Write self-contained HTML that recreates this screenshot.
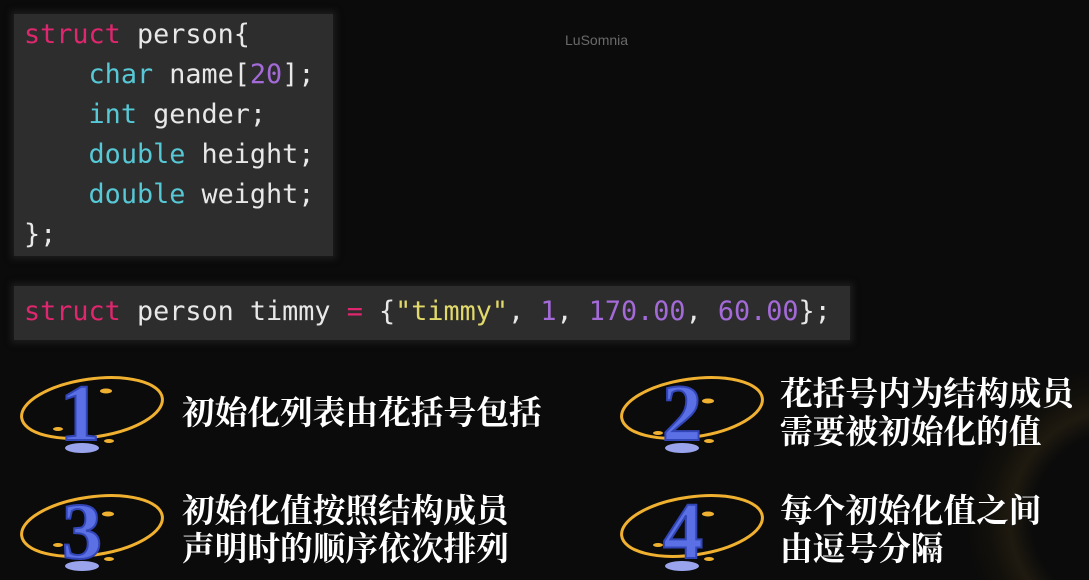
<!DOCTYPE html>
<html><head><meta charset="utf-8"><style>
html,body{margin:0;padding:0;height:580px;overflow:hidden}
body{width:1089px;height:580px;position:relative;overflow:hidden;font-family:"Liberation Sans",sans-serif;background:radial-gradient(circle 220px at 1120px 520px,#0b0b0b 0,#0b0b0b 88px,#1f1a10 110px,#12100b 132px,#0b0b0b 154px) #0b0b0b}
.box{position:absolute;background:#2d2d2d;box-shadow:0 0 6px 3px #1d1d1d}
.code{position:absolute;font-family:"DejaVu Sans Mono","Liberation Mono",monospace;font-size:26.8px;line-height:40px;color:#e8e8e8;white-space:pre}
.k{color:#e0266e}.t{color:#56c8d6}.n{color:#a36ad8}.s{color:#e2d96b}
.wm{position:absolute;left:565px;top:32px;font-size:14px;color:#6a6a6a}
.cn{position:absolute;font-family:"Liberation Serif","Noto Serif CJK SC",serif;font-weight:bold;font-size:32.7px;line-height:38px;color:#fff}
svg.ic{position:absolute;width:150px;height:90px}
</style></head><body>
<div class="box" style="left:14px;top:14px;width:319px;height:242px"></div>
<div class="code" style="left:24px;top:15px"><span class="k">struct</span> person{
    <span class="t">char</span> name[<span class="n">20</span>];
    <span class="t">int</span> gender;
    <span class="t">double</span> height;
    <span class="t">double</span> weight;
};</div>
<div class="wm">LuSomnia</div>
<div class="box" style="left:14px;top:286px;width:836px;height:54px"></div>
<div class="code" style="left:24px;top:292px"><span class="k">struct</span> person timmy <span class="k">=</span> {<span class="s">"timmy"</span>, <span class="n">1</span>, <span class="n">170.00</span>, <span class="n">60.00</span>};</div>

<svg class="ic" style="left:18px;top:368px" viewBox="0 0 150 90"><ellipse cx="74" cy="40" rx="71" ry="29" transform="rotate(-8 74 40)" fill="none" stroke="#f0b030" stroke-width="3"/><ellipse cx="64" cy="80" rx="17" ry="5" fill="#9aa4ec"/><text x="62" y="72" text-anchor="middle" font-family="Liberation Serif,serif" font-weight="bold" font-size="80" fill="#5a70e4" stroke="#3346b8" stroke-width="2">1</text><ellipse cx="88" cy="23" rx="6" ry="2.5" fill="#f0b030"/><ellipse cx="40" cy="61" rx="5" ry="2" fill="#f0b030"/><ellipse cx="91" cy="73" rx="5" ry="2" fill="#f0b030"/></svg>
<svg class="ic" style="left:618px;top:368px" viewBox="0 0 150 90"><ellipse cx="74" cy="40" rx="71" ry="29" transform="rotate(-8 74 40)" fill="none" stroke="#f0b030" stroke-width="3"/><ellipse cx="64" cy="80" rx="17" ry="5" fill="#9aa4ec"/><text x="64" y="72" text-anchor="middle" font-family="Liberation Serif,serif" font-weight="bold" font-size="80" fill="#5a70e4" stroke="#3346b8" stroke-width="2">2</text><ellipse cx="90" cy="33" rx="6" ry="2.5" fill="#f0b030"/><ellipse cx="40" cy="65" rx="5" ry="2" fill="#f0b030"/><ellipse cx="91" cy="73" rx="5" ry="2" fill="#f0b030"/></svg>
<svg class="ic" style="left:18px;top:486px" viewBox="0 0 150 90"><ellipse cx="74" cy="40" rx="71" ry="29" transform="rotate(-8 74 40)" fill="none" stroke="#f0b030" stroke-width="3"/><ellipse cx="64" cy="80" rx="17" ry="5" fill="#9aa4ec"/><text x="64" y="72" text-anchor="middle" font-family="Liberation Serif,serif" font-weight="bold" font-size="80" fill="#5a70e4" stroke="#3346b8" stroke-width="2">3</text><ellipse cx="90" cy="28" rx="6" ry="2.5" fill="#f0b030"/><ellipse cx="40" cy="59" rx="5" ry="2" fill="#f0b030"/><ellipse cx="91" cy="73" rx="5" ry="2" fill="#f0b030"/></svg>
<svg class="ic" style="left:618px;top:486px" viewBox="0 0 150 90"><ellipse cx="74" cy="40" rx="71" ry="29" transform="rotate(-8 74 40)" fill="none" stroke="#f0b030" stroke-width="3"/><ellipse cx="64" cy="80" rx="17" ry="5" fill="#9aa4ec"/><text x="65" y="72" text-anchor="middle" font-family="Liberation Serif,serif" font-weight="bold" font-size="80" fill="#5a70e4" stroke="#3346b8" stroke-width="2">4</text><ellipse cx="90" cy="28" rx="6" ry="2.5" fill="#f0b030"/><ellipse cx="40" cy="59" rx="5" ry="2" fill="#f0b030"/><ellipse cx="91" cy="73" rx="5" ry="2" fill="#f0b030"/></svg>

<div class="cn" style="left:182px;top:395px">初始化列表由花括号包括</div>
<div class="cn" style="left:780px;top:376px">花括号内为结构成员<br>需要被初始化的值</div>
<div class="cn" style="left:182px;top:493px">初始化值按照结构成员<br>声明时的顺序依次排列</div>
<div class="cn" style="left:780px;top:493px">每个初始化值之间<br>由逗号分隔</div>
</body></html>
